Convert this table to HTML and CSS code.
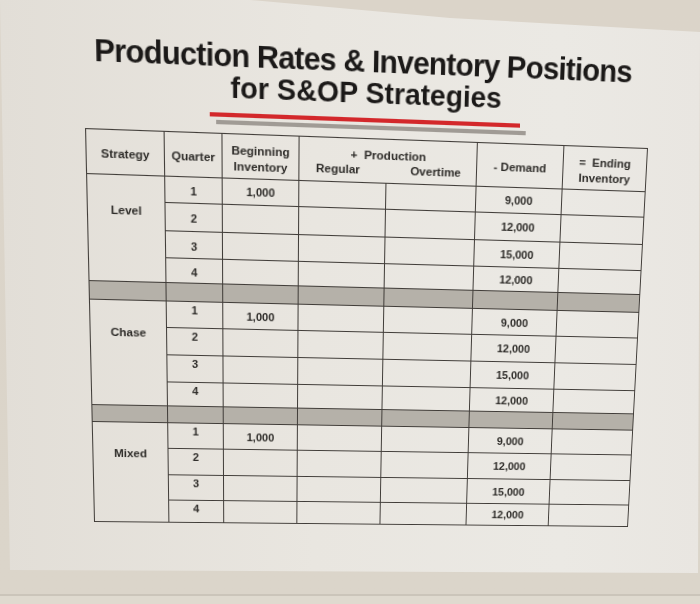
FILE: index.html
```html
<!DOCTYPE html>
<html lang="en">
<head>
<meta charset="utf-8">
<title>Production Rates &amp; Inventory Positions for S&amp;OP Strategies</title>
<link rel="stylesheet" href="styles.css">
</head>
<body>
<div class="paper">
  <div class="sheet">
    <h1 class="title"><span class="tline">Production Rates &amp; Inventory Positions</span><span class="tline tline2">for S&amp;OP Strategies</span></h1>
    <div class="rule"></div>
    <div class="grid">
      <div class="cell hd">Strategy</div>
      <div class="cell hd">Quarter</div>
      <div class="cell hd two">Beginning<br>Inventory</div>
      <div class="cell prod"><div class="prod-top">+&nbsp; Production</div><div class="prod-sub"><span>Regular</span><span>Overtime</span></div></div>
      <div class="cell hd">- Demand</div>
      <div class="cell hd two">=&nbsp; Ending<br>Inventory</div>

      <div class="cell strat lvl">Level</div>
      <div class="cell q">1</div><div class="cell">1,000</div><div class="cell"></div><div class="cell"></div><div class="cell">9,000</div><div class="cell"></div>
      <div class="cell q">2</div><div class="cell"></div><div class="cell"></div><div class="cell"></div><div class="cell">12,000</div><div class="cell"></div>
      <div class="cell q">3</div><div class="cell"></div><div class="cell"></div><div class="cell"></div><div class="cell">15,000</div><div class="cell"></div>
      <div class="cell q">4</div><div class="cell"></div><div class="cell"></div><div class="cell"></div><div class="cell">12,000</div><div class="cell"></div>

      <div class="cell band"></div><div class="cell band"></div><div class="cell band"></div><div class="cell band"></div><div class="cell band"></div><div class="cell band"></div><div class="cell band"></div>

      <div class="cell strat">Chase</div>
      <div class="cell q hi">1</div><div class="cell">1,000</div><div class="cell"></div><div class="cell"></div><div class="cell">9,000</div><div class="cell"></div>
      <div class="cell q hi">2</div><div class="cell"></div><div class="cell"></div><div class="cell"></div><div class="cell">12,000</div><div class="cell"></div>
      <div class="cell q hi">3</div><div class="cell"></div><div class="cell"></div><div class="cell"></div><div class="cell">15,000</div><div class="cell"></div>
      <div class="cell q hi">4</div><div class="cell"></div><div class="cell"></div><div class="cell"></div><div class="cell">12,000</div><div class="cell"></div>

      <div class="cell band"></div><div class="cell band"></div><div class="cell band"></div><div class="cell band"></div><div class="cell band"></div><div class="cell band"></div><div class="cell band"></div>

      <div class="cell strat">Mixed</div>
      <div class="cell q hi">1</div><div class="cell">1,000</div><div class="cell"></div><div class="cell"></div><div class="cell">9,000</div><div class="cell"></div>
      <div class="cell q hi">2</div><div class="cell"></div><div class="cell"></div><div class="cell"></div><div class="cell">12,000</div><div class="cell"></div>
      <div class="cell q hi">3</div><div class="cell"></div><div class="cell"></div><div class="cell"></div><div class="cell">15,000</div><div class="cell"></div>
      <div class="cell q hi">4</div><div class="cell"></div><div class="cell"></div><div class="cell"></div><div class="cell">12,000</div><div class="cell"></div>
    </div>
  </div>
</div>
</body>
</html>
```
FILE: styles.css
```css
html, body {
  margin: 0;
  padding: 0;
}
body {
  width: 700px;
  height: 604px;
  overflow: hidden;
  background: linear-gradient(to bottom, #dbd4c9 0, #dbd5ca 594px, #cbc5ba 594px, #cbc5ba 596px, #dfdacf 596px);
  font-family: "Liberation Sans", Arial, sans-serif;
}
.paper {
  width: 700px;
  height: 604px;
  background: linear-gradient(90deg, #e2ded7 0%, #e9e6e0 45%, #ebe9e4 80%, #e9e6e1 100%);
  clip-path: polygon(0 0, 250px 0, 450px 18px, 700px 32px, 698px 573px, 10px 570px);
}
.sheet {
  width: 700px;
  height: 604px;
  transform-origin: 0 0;
  transform: matrix3d(1.102313, 0.048257, 0, 0.000072796, 0.037892, 1.125757, 0, 0.000148365, 0, 0, 1, 0, -17.141, -28.2385, 0, 1);
}
.title {
  margin: 0;
  padding: 52px 0 0 18px;
  text-align: center;
  font-size: 29px;
  line-height: 28px;
  font-weight: bold;
  letter-spacing: -0.75px;
  color: #1b1918;
}
.tline {
  display: block;
}
.tline2 {
  font-size: 27.5px;
  letter-spacing: 0;
  padding-top: 2px;
}
.rule {
  margin: 9px 0 0 208px;
  width: 301px;
  height: 4px;
  background: #d3282b;
  box-shadow: 6px 7px 0 #a09b95;
}
.grid {
  margin: 15px 0 0 90px;
  width: 548px;
  box-sizing: border-box;
  display: grid;
  grid-template-columns: 74px 55px 74px 85px 89px 86px 84px;
  grid-template-rows: 42px 25px 27px 26px 24px 18px 26px 27px 27px 24px 17px 26px 27px 26px 23px;
  border-top: 1px solid #403c38;
  border-left: 1px solid #403c38;
}
.cell {
  box-sizing: border-box;
  border-right: 1px solid #403c38;
  border-bottom: 1px solid #403c38;
  display: flex;
  align-items: center;
  justify-content: center;
  text-align: center;
  font-weight: bold;
  font-size: 11px;
  line-height: 14px;
  color: #2e2c29;
}
.hd {
  font-size: 11.5px;
  padding-top: 2px;
}
.hd.two {
  line-height: 15px;
  padding-top: 4px;
}
.prod {
  grid-column: span 2;
  flex-direction: column;
  align-items: stretch;
  justify-content: flex-start;
  padding-top: 8px;
  font-size: 11.5px;
}
.prod-top {
  text-align: center;
}
.prod-sub {
  display: flex;
  justify-content: space-between;
  padding: 0 15px 0 16px;
}
.strat {
  grid-row: span 4;
  align-items: flex-start;
  padding-top: 24px;
  font-size: 11.5px;
}
.strat.lvl {
  padding-top: 26px;
}
.q {
  padding-top: 2px;
}
.q.hi {
  align-items: flex-start;
  padding-top: 1px;
}
.band {
  background: #b5b1a9;
}
```
